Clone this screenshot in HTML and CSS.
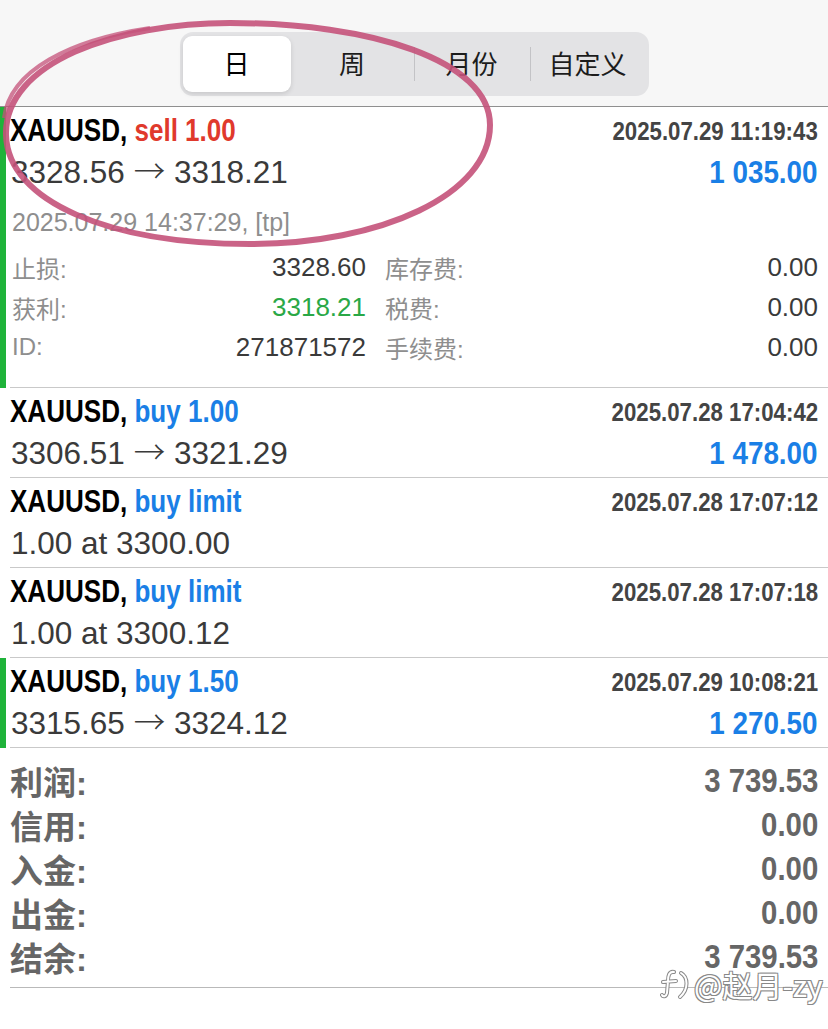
FILE: index.html
```html
<!DOCTYPE html>
<html lang="zh">
<head>
    <meta charset="UTF-8">
    <meta name="viewport" content="width=device-width, initial-scale=1.0">
    <title>历史</title>
    <link rel="stylesheet" href="styles.css">
</head>
<body>
<div class="page">
    <header class="topbar">
        <div class="segmented">
            <span class="seg active">日</span>
            <span class="seg">周</span>
            <span class="seg sep">月份</span>
            <span class="seg sep">自定义</span>
        </div>
    </header>

    <section class="deals">
        <!-- 已平仓, 展开 -->
        <div class="deal marked">
            <div class="deal-body">
                <div class="line1">
                    <span class="title">XAUUSD, <span class="sell">sell 1.00</span></span>
                    <span class="time">2025.07.29 11:19:43</span>
                </div>
                <div class="line2">
                    <span class="price">3328.56 <span class="arrow">→</span> 3318.21</span>
                    <span class="profit">1 035.00</span>
                </div>
                <div class="closetime">2025.07.29 14:37:29, [tp]</div>
                <div class="details">
                    <div class="field"><span class="label">止损:</span><span class="value">3328.60</span></div>
                    <div class="field"><span class="label">库存费:</span><span class="value">0.00</span></div>
                    <div class="field"><span class="label">获利:</span><span class="value green">3318.21</span></div>
                    <div class="field"><span class="label">税费:</span><span class="value">0.00</span></div>
                    <div class="field"><span class="label">ID:</span><span class="value">271871572</span></div>
                    <div class="field"><span class="label">手续费:</span><span class="value">0.00</span></div>
                </div>
            </div>
        </div>

        <div class="deal">
            <div class="deal-body">
                <div class="line1">
                    <span class="title">XAUUSD, <span class="buy">buy 1.00</span></span>
                    <span class="time">2025.07.28 17:04:42</span>
                </div>
                <div class="line2">
                    <span class="price">3306.51 <span class="arrow">→</span> 3321.29</span>
                    <span class="profit">1 478.00</span>
                </div>
            </div>
        </div>

        <div class="deal">
            <div class="deal-body">
                <div class="line1">
                    <span class="title">XAUUSD, <span class="buy">buy limit</span></span>
                    <span class="time">2025.07.28 17:07:12</span>
                </div>
                <div class="line2">
                    <span class="price">1.00 at 3300.00</span>
                </div>
            </div>
        </div>

        <div class="deal">
            <div class="deal-body">
                <div class="line1">
                    <span class="title">XAUUSD, <span class="buy">buy limit</span></span>
                    <span class="time">2025.07.28 17:07:18</span>
                </div>
                <div class="line2">
                    <span class="price">1.00 at 3300.12</span>
                </div>
            </div>
        </div>

        <div class="deal marked">
            <div class="deal-body">
                <div class="line1">
                    <span class="title">XAUUSD, <span class="buy">buy 1.50</span></span>
                    <span class="time">2025.07.29 10:08:21</span>
                </div>
                <div class="line2">
                    <span class="price">3315.65 <span class="arrow">→</span> 3324.12</span>
                    <span class="profit">1 270.50</span>
                </div>
            </div>
        </div>
    </section>

    <section class="summary">
        <div class="summary-body">
            <div class="sum-row"><span class="sum-label">利润:</span><span class="sum-value">3 739.53</span></div>
            <div class="sum-row"><span class="sum-label">信用:</span><span class="sum-value">0.00</span></div>
            <div class="sum-row"><span class="sum-label">入金:</span><span class="sum-value">0.00</span></div>
            <div class="sum-row"><span class="sum-label">出金:</span><span class="sum-value">0.00</span></div>
            <div class="sum-row"><span class="sum-label">结余:</span><span class="sum-value">3 739.53</span></div>
        </div>
    </section>

    <!-- 水印 -->
    <div class="watermark">
        <svg class="wm-logo" width="32" height="34" viewBox="0 0 32 34">
            <path d="M14 5 C9 4 8 9 8 14 L7 26 C6 30 3 30 2 28 M3 15 L16 14" fill="none" stroke="#8a8a8a" stroke-width="4" stroke-linecap="round"/>
            <path d="M14 5 C9 4 8 9 8 14 L7 26 C6 30 3 30 2 28 M3 15 L16 14" fill="none" stroke="#fff" stroke-width="2" stroke-linecap="round"/>
            <path d="M21 6 C28 10 29 22 20 30" fill="none" stroke="#8a8a8a" stroke-width="4" stroke-linecap="round"/>
            <path d="M21 6 C28 10 29 22 20 30" fill="none" stroke="#fff" stroke-width="2" stroke-linecap="round"/>
        </svg>
        <span class="wm-text">@赵月-zy</span>
    </div>

    <!-- 手绘圈 -->
    <svg class="scribble" width="828" height="260" viewBox="0 0 828 260">
        <path d="M6 135 C4 62 118 23 230 23 C370 23 490 60 490 125 C490 195 380 244 250 244 C110 244 8 202 6 135 Z"
              fill="none" stroke="#c4527a" stroke-width="6" opacity="0.9"/>
        <path d="M4 118 C10 70 70 40 150 28" fill="none" stroke="#c4527a" stroke-width="4" opacity="0.75"/>
    </svg>
</div>
</body>
</html>
```

FILE: styles.css
```css
body {
    margin: 0;
    background: #fff;
    font-family: "Liberation Sans", "Noto Sans CJK SC", sans-serif;
    color: #3a3a3a;
}
.page {
    position: relative;
    width: 828px;
    min-height: 1029px;
    overflow: hidden;
}

/* barre du haut */
.topbar {
    background: #f7f7f7;
    height: 107px;
    padding-top: 32px;
    box-sizing: border-box;
    border-bottom: 1px solid #8f8f8f;
    display: flex;
    justify-content: center;
}
.segmented {
    display: grid;
    grid-template-columns: 108px 123px 116px 116px;
    height: 64px;
    padding: 4px 3px;
    box-sizing: border-box;
    background: #e3e3e5;
    border-radius: 13px;
}
.seg {
    display: flex;
    align-items: center;
    justify-content: center;
    padding-bottom: 3px;
    font-family: "Noto Sans CJK SC", sans-serif;
    font-size: 26px;
    color: #1c1c1c;
    position: relative;
}
.seg.sep::before {
    content: "";
    position: absolute;
    left: 0;
    top: 11px;
    bottom: 11px;
    width: 1px;
    background: #c3c3c6;
}
.seg.active {
    background: #fff;
    border-radius: 9px;
    color: #000;
    box-shadow: 0 2px 5px rgba(0, 0, 0, 0.12);
}

/* liste des ordres */
.deal {
    padding-left: 10px;
}
.deal.marked {
    border-left: 6px solid #1fb33a;
    padding-left: 4px;
}
.deal-body {
    border-bottom: 1px solid #c9c9c9;
    padding: 4px 10px 3px 0;
}
.line1, .line2 {
    display: flex;
    justify-content: space-between;
    align-items: center;
}
.line1 {
    height: 40px;
}
.line2 {
    height: 42px;
}
/* police étroite : pas de face "Narrow" installée, on comprime */
.title, .time, .profit, .sum-value {
    display: inline-block;
    font-weight: bold;
    white-space: nowrap;
}
.title {
    font-size: 31px;
    color: #000;
    transform: scaleX(0.84);
    transform-origin: left center;
}
.sell {
    color: #e0392c;
}
.buy {
    color: #1a7fe6;
}
.time {
    font-size: 25px;
    color: #444;
    transform: scaleX(0.89);
    transform-origin: right center;
}
.profit {
    font-size: 32px;
    color: #1a7fe6;
    transform: scaleX(0.87);
    transform-origin: right center;
}
.price {
    font-size: 31.5px;
    color: #3a3a3a;
    padding-left: 1px;
}
.arrow {
    font-family: "Noto Sans CJK SC", sans-serif;
    font-weight: 300;
    line-height: 0;
}
.closetime {
    margin-top: 11px;
    line-height: 36px;
    font-size: 25px;
    color: #8e8e8e;
    padding-left: 2px;
}
.details {
    display: grid;
    grid-template-columns: 354px 1fr;
    column-gap: 19px;
    margin: 7px 0 17px 2px;
}
.field {
    display: flex;
    justify-content: space-between;
    align-items: center;
    height: 40px;
}
.label {
    font-size: 24px;
    color: #8e8e8e;
}
.value {
    font-size: 26px;
    color: #3a3a3a;
}
.value.green {
    color: #2aa846;
}

/* totaux */
.summary {
    padding-left: 10px;
}
.summary-body {
    border-bottom: 1px solid #b9b9b9;
    padding: 11px 10px 8px 0;
}
.sum-row {
    display: flex;
    justify-content: space-between;
    align-items: center;
    height: 44px;
}
.sum-label {
    font-weight: bold;
    font-size: 33px;
    color: #666;
}
.sum-value {
    font-size: 33px;
    color: #666;
    transform: scaleX(0.89);
    transform-origin: right center;
}

/* filigrane */
.watermark {
    position: absolute;
    left: 660px;
    top: 962px;
    display: flex;
    align-items: center;
    gap: 2px;
}
.wm-text {
    font-family: "Noto Sans CJK SC", sans-serif;
    font-size: 30px;
    color: #fff;
    text-shadow: -1px -1px 0 #888, 1px -1px 0 #888, -1px 1px 0 #888, 1px 1px 0 #888;
}

/* cercle dessiné à la main */
.scribble {
    position: absolute;
    left: 0;
    top: 0;
    pointer-events: none;
}
```
